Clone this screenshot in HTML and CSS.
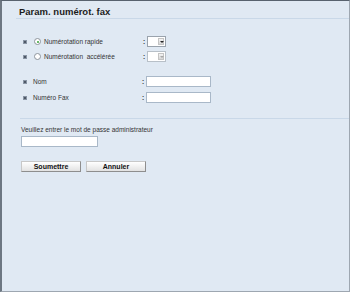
FILE: index.html
```html
<!DOCTYPE html>
<html lang="fr">
<head>
<meta charset="utf-8">
<link rel="stylesheet" href="styles.css">
</head>
<body>
<div class="frame">
  <div class="title">Param. numérot. fax</div>
  <div class="rows">
    <div class="row">
      <span class="bullet"></span>
      <span class="radio on"></span>
      <span class="label">Numérotation rapide</span>
      <span class="colon">:</span>
      <span class="select"><span class="arrow"></span></span>
    </div>
    <div class="row">
      <span class="bullet"></span>
      <span class="radio"></span>
      <span class="label">Numérotation&nbsp; accélérée</span>
      <span class="colon">:</span>
      <span class="select disabled"><span class="arrow"></span></span>
    </div>
  </div>
  <div class="rows second">
    <div class="row">
      <span class="bullet"></span>
      <span class="label plain">Nom</span>
      <span class="colon">:</span>
      <span class="input"></span>
    </div>
    <div class="row">
      <span class="bullet"></span>
      <span class="label plain">Numéro Fax</span>
      <span class="colon">:</span>
      <span class="input"></span>
    </div>
  </div>
  <div class="auth">
    <div class="prompt">Veuillez entrer le mot de passe administrateur</div>
    <span class="input pw"></span>
    <div class="buttons">
      <button class="btn">Soumettre</button>
      <button class="btn">Annuler</button>
    </div>
  </div>
</div>
</body>
</html>
```
FILE: styles.css
```css
html, body {
  margin: 0;
  padding: 0;
  background: #e0e9f3;
}
.frame {
  box-sizing: border-box;
  width: 350px;
  height: 292px;
  border-top: 1px solid #58626e;
  border-left: 2px solid #6d7782;
  border-right: 1px solid #9ea7b1;
  border-bottom: 1px solid #9ea7b1;
  font-family: "Liberation Sans", Arial, sans-serif;
  font-size: 6.5px;
  color: #333;
}
.title {
  margin-left: 14px;
  padding: 5px 0 0 3px;
  height: 12px;
  border-bottom: 1px solid #c9d8e8;
  font-size: 9.5px;
  font-weight: bold;
  color: #1c1c1c;
}
.rows {
  padding: 17px 0 0 21px;
  display: flex;
  flex-direction: column;
  gap: 4px;
}
.rows.second {
  padding-top: 14px;
  gap: 5px;
}
.row {
  display: flex;
  align-items: center;
  height: 11px;
}
.bullet {
  width: 4px;
  height: 4px;
  background: #4e5866;
  border: 0.5px solid #8894a4;
  box-sizing: border-box;
  margin-right: 7px;
}
.radio {
  box-sizing: border-box;
  width: 7px;
  height: 7px;
  border: 1px solid #8d949c;
  border-radius: 50%;
  background: #fff;
  margin-right: 3px;
  position: relative;
}
.radio.on::after {
  content: "";
  position: absolute;
  left: 1.5px;
  top: 1.5px;
  width: 2px;
  height: 2px;
  border-radius: 50%;
  background: #3aa33a;
}
.label {
  width: 99px;
}
.label.plain {
  width: 109px;
  margin-left: -1px;
}
.colon {
  width: 4px;
  font-weight: bold;
}
.select {
  box-sizing: border-box;
  width: 19px;
  height: 11px;
  border: 1px solid #9aa3ad;
  background: #fff;
  display: flex;
  justify-content: flex-end;
  align-items: center;
  padding-right: 1px;
}
.arrow {
  box-sizing: border-box;
  width: 6px;
  height: 7px;
  background: linear-gradient(#f4f4f4, #d6d6d6);
  border: 1px solid #c4c4c4;
  position: relative;
}
.arrow::after {
  content: "";
  position: absolute;
  left: 0.5px;
  top: 2px;
  border-left: 2px solid transparent;
  border-right: 2px solid transparent;
  border-top: 2px solid #222;
}
.select.disabled .arrow::after {
  border-top-color: #a8a8a8;
}
.select.disabled {
  border-color: #b8c0c8;
}
.input {
  box-sizing: border-box;
  display: block;
  width: 65px;
  height: 11px;
  border: 1px solid #a9b8c8;
  background: #fff;
}
.auth {
  margin: 15px 0 0 18px;
  padding: 6px 0 0 1px;
  border-top: 1px solid #c9d8e8;
}
.prompt {
  height: 9px;
  line-height: 9px;
}
.input.pw {
  margin-top: 2px;
  width: 77px;
}
.buttons {
  display: flex;
  gap: 5px;
  margin-top: 14px;
}
.btn {
  box-sizing: border-box;
  width: 60px;
  height: 11px;
  padding: 0;
  border: 1px solid #8e8e8e;
  border-top-color: #c8c8c8;
  border-left-color: #c8c8c8;
  border-radius: 0;
  background: linear-gradient(#ffffff, #e2e2e2);
  font-family: "Liberation Sans", Arial, sans-serif;
  font-size: 7px;
  font-weight: bold;
  color: #111;
  line-height: 9px;
}
```
